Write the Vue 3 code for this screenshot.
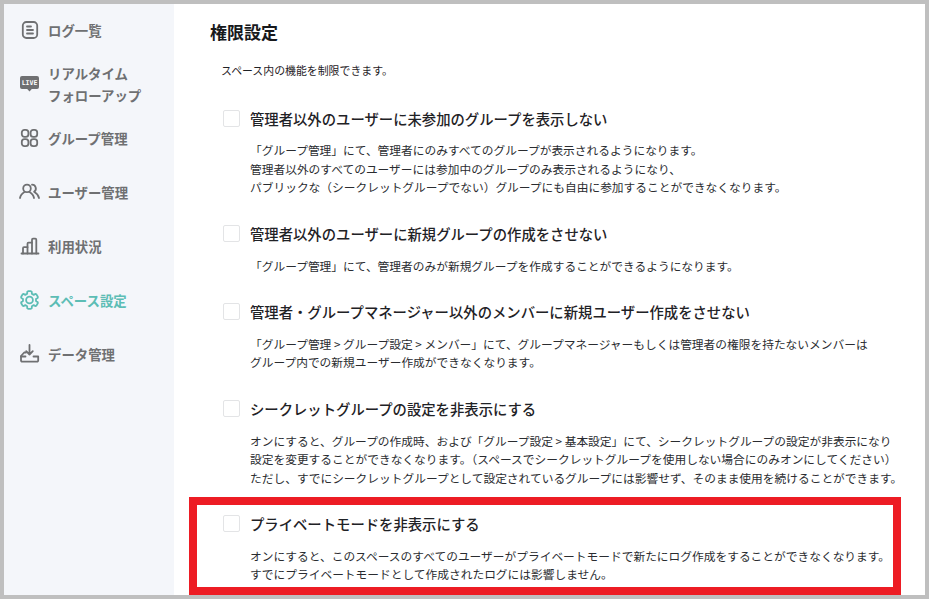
<script setup>
const navItems = [
  { id: 'log', lines: ['ログ一覧'] },
  { id: 'live', lines: ['リアルタイム', 'フォローアップ'] },
  { id: 'group', lines: ['グループ管理'] },
  { id: 'user', lines: ['ユーザー管理'] },
  { id: 'usage', lines: ['利用状況'] },
  { id: 'space', lines: ['スペース設定'], active: true },
  { id: 'data', lines: ['データ管理'] },
]

const settings = [
  {
    title: '管理者以外のユーザーに未参加のグループを表示しない',
    lines: [
      '「グループ管理」にて、管理者にのみすべてのグループが表示されるようになります。',
      '管理者以外のすべてのユーザーには参加中のグループのみ表示されるようになり、',
      'パブリックな（シークレットグループでない）グループにも自由に参加することができなくなります。',
    ],
  },
  {
    title: '管理者以外のユーザーに新規グループの作成をさせない',
    lines: ['「グループ管理」にて、管理者のみが新規グループを作成することができるようになります。'],
  },
  {
    title: '管理者・グループマネージャー以外のメンバーに新規ユーザー作成をさせない',
    lines: [
      '「グループ管理 > グループ設定 > メンバー」にて、グループマネージャーもしくは管理者の権限を持たないメンバーは',
      'グループ内での新規ユーザー作成ができなくなります。',
    ],
  },
  {
    title: 'シークレットグループの設定を非表示にする',
    lines: [
      'オンにすると、グループの作成時、および「グループ設定 > 基本設定」にて、シークレットグループの設定が非表示になり',
      '設定を変更することができなくなります。（スペースでシークレットグループを使用しない場合にのみオンにしてください）',
      'ただし、すでにシークレットグループとして設定されているグループには影響せず、そのまま使用を続けることができます。',
    ],
  },
  {
    title: 'プライベートモードを非表示にする',
    lines: [
      'オンにすると、このスペースのすべてのユーザーがプライベートモードで新たにログ作成をすることができなくなります。',
      'すでにプライベートモードとして作成されたログには影響しません。',
    ],
    marked: true,
  },
]

// six toothed gear outline
const gearPath = (() => {
  const cx = 10.5
  const cy = 11
  const pts = []
  for (let i = 0; i < 6; i++) {
    const a = -90 + i * 60
    const list = [[a - 15, 8.6], [a - 9, 8.9], [a + 9, 8.9], [a + 15, 8.6], [a + 21, 6.6], [a + 39, 6.6]]
    for (const [deg, r] of list) {
      const rad = (deg * Math.PI) / 180
      pts.push((cx + r * Math.cos(rad)).toFixed(2) + ' ' + (cy + r * Math.sin(rad)).toFixed(2))
    }
  }
  return 'M' + pts.join('L') + 'Z'
})()
</script>

<template>
  <div class="frame">
    <aside class="sidebar">
      <div v-for="item in navItems" :key="item.id" class="nav-item" :class="[item.id, { active: item.active }]">
        <svg class="nav-icon" width="22" height="22" viewBox="0 0 22 22" fill="none" stroke="currentColor" stroke-width="1.8" stroke-linecap="round" stroke-linejoin="round">
          <template v-if="item.id === 'log'">
            <rect x="3.800" y="3" width="14.400" height="16" rx="3.600" />
            <path d="M8 7.500h4M8 11h6M8 14.500h6" />
          </template>
          <template v-else-if="item.id === 'live'">
            <path d="M3 3h15a2 2 0 0 1 2 2v9a2 2 0 0 1-2 2h-5.200l-2.300 2.500L8.200 16H3a2 2 0 0 1-2-2V5a2 2 0 0 1 2-2z" fill="currentColor" stroke="none" />
            <text x="10.500" y="12.300" text-anchor="middle" class="live-text">LIVE</text>
          </template>
          <template v-else-if="item.id === 'group'">
            <rect x="2.800" y="2.800" width="6.600" height="7" rx="2.600" />
            <rect x="11.600" y="2.800" width="6.600" height="7" rx="2.600" />
            <rect x="2.800" y="12.200" width="6.600" height="7" rx="2.600" />
            <rect x="11.600" y="12.200" width="6.600" height="7" rx="2.600" />
          </template>
          <template v-else-if="item.id === 'user'">
            <circle cx="8" cy="7.400" r="3.800" />
            <path d="M1 17c.5-2.800 2.400-4.900 4.800-6.300M15 17c-.5-2.800-2.400-4.900-4.800-6.300" />
            <path d="M13 3.700a3.800 3.800 0 0 1 2.100 7c2.400 1.400 4.300 3.500 4.900 6.300" />
          </template>
          <template v-else-if="item.id === 'usage'">
            <path d="M2.500 18.500h17" />
            <path d="M4 18.500v-5.300a1 1 0 0 1 1-1h3.500" />
            <path d="M8.500 18.500V8.700a1 1 0 0 1 1-1H13" />
            <path d="M13 18.500V4.700a1 1 0 0 1 1-1h2.300a1 1 0 0 1 1 1v13.800" />
          </template>
          <template v-else-if="item.id === 'space'">
            <path :d="gearPath" />
            <circle cx="10.500" cy="11" r="3.400" />
          </template>
          <template v-else>
            <path d="M7 9.500H5.200L2 13v4.400a1.200 1.200 0 0 0 1.200 1.200h14.800a1.200 1.200 0 0 0 1.200-1.200V13.500H14.500" />
            <path d="M2 13.500h4.500" />
            <path d="M10.500 2v9.500M7.200 8.200l3.300 3.300 3.300-3.300" />
          </template>
        </svg>
        <span class="nav-label">
          <span v-for="line in item.lines" :key="line" class="nav-line">{{ line }}</span>
        </span>
      </div>
    </aside>

    <main class="content">
      <h1 class="heading">権限設定</h1>
      <p class="lead">スペース内の機能を制限できます。</p>
      <section v-for="s in settings" :key="s.title" class="setting" :class="{ marked: s.marked }">
        <div class="setting-title">
          <span class="checkbox"></span>
          <span>{{ s.title }}</span>
        </div>
        <p class="desc">
          <span v-for="line in s.lines" :key="line" class="desc-line">{{ line }}</span>
        </p>
      </section>
    </main>
  </div>
</template>

<style>
html, body {
  margin: 0;
  background: #fff;
}
</style>

<style scoped>
.frame {
  width: 929px;
  height: 599px;
  box-sizing: border-box;
  border: 4px solid #bfbfbf;
  display: flex;
  overflow: hidden;
  background: #fff;
  font-family: "Noto Sans CJK JP", "Noto Sans", sans-serif;
  color: #1f2226;
}

.sidebar {
  width: 170px;
  flex: none;
  background: #f4f6fa;
  padding-top: 5px;
  box-sizing: border-box;
}

.nav-item {
  display: flex;
  align-items: center;
  gap: 7px;
  height: 54px;
  box-sizing: border-box;
  padding-left: 15px;
  color: #6f7072;
  font-size: 13.400px;
  font-weight: 700;
}

.nav-item.log { height: 42px; }
.nav-item.live { height: 60px; padding-top: 6px; }
.nav-item.active { color: #5cbdb5; }
.nav-icon { flex: none; }

.live-text {
  font-family: "DejaVu Sans Mono", monospace;
  font-size: 6.500px;
  font-weight: 700;
  fill: #fff;
  stroke: none;
}

.nav-line {
  display: block;
  line-height: 22px;
}

.content {
  flex: 1;
  padding: 16px 0 0 36px;
  min-width: 0;
}

.heading {
  margin: 0;
  font-size: 17px;
  line-height: 24px;
  font-weight: 700;
  color: #17191c;
}

.lead {
  margin: 17px 0 0 11px;
  font-size: 10.900px;
  line-height: 18px;
}

.setting {
  position: relative;
  padding-left: 13px;
  margin-bottom: 25.500px;
}

.lead + .setting {
  margin-top: 28px;
}

.setting-title {
  display: flex;
  align-items: center;
  gap: 10px;
  height: 22px;
  font-size: 14.350px;
  font-weight: 500;
  color: #1f2226;
}

.checkbox {
  width: 17px;
  height: 17px;
  flex: none;
  box-sizing: border-box;
  border: 1px solid #e3e4e6;
  border-radius: 2px;
  background: #fff;
}

.desc {
  margin: 12.300px 0 0 27px;
  font-size: 11.720px;
  line-height: 18.500px;
  color: #2a2c30;
}

.desc-line {
  display: block;
  white-space: nowrap;
}

.setting.marked::after {
  content: "";
  position: absolute;
  left: -21px;
  top: -16px;
  width: 712px;
  height: 98px;
  box-sizing: border-box;
  border: 8px solid #ed1c24;
}
</style>
